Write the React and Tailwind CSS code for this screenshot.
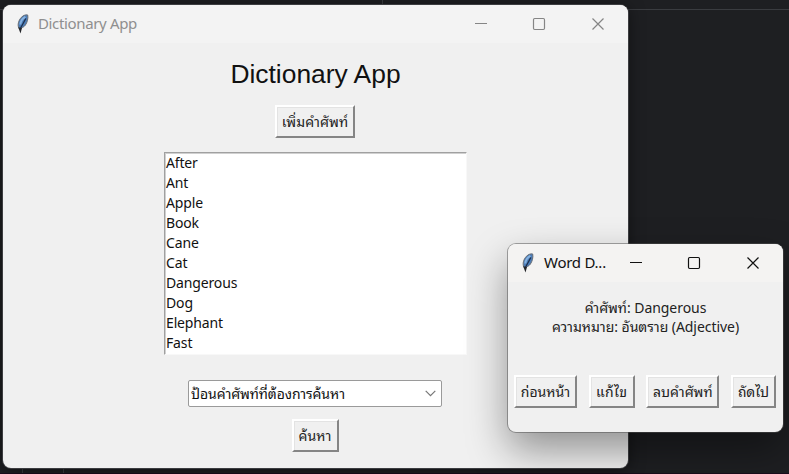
import React from 'react';

const WORDS = ['After', 'Ant', 'Apple', 'Book', 'Cane', 'Cat', 'Dangerous', 'Dog', 'Elephant', 'Fast'];

function Feather() {
  return (
    <svg className="h-[21px] w-[14px] shrink-0" viewBox="0 0 14 21">
      <path d="M3 14.500C1.200 11 2.400 6.500 5.400 3.300 7.500 1.200 10 .5 11.700 1c.7 3.300-.4 7.400-2.400 10.200-1.500 1.900-3.500 3-6.300 3.300z" fill="#4c7db8" stroke="#6a6e74" strokeWidth="1" />
      <path d="M4.300 10.500C4.600 7 6.800 4.200 9.400 2.800" fill="none" stroke="#86b2e0" strokeWidth="2" />
      <path d="M9.800 4.500C8.200 7.500 6.500 10.500 4.600 14" fill="none" stroke="#1d2f4c" strokeWidth="1.300" />
      <path d="M2.200 13.200L6 14 4.500 19.500z" fill="#24262a" />
    </svg>
  );
}

function TitleBar({ title, titleClass, controlClass }) {
  return (
    <div className={`flex h-[38px] shrink-0 items-center ${controlClass}`}>
      <div className="flex flex-1 items-center pl-[13px]">
        <Feather />
        <span className={`ml-2 whitespace-nowrap ${titleClass}`}>{title}</span>
      </div>
      <svg className="mr-[20px] h-[14px] w-[136px] shrink-0" viewBox="0 0 136 14" fill="none" stroke="currentColor">
        <path d="M3 6.500h12" />
        <rect x="61.500" y="1.500" width="11" height="11" rx="1.200" strokeWidth="1.200" />
        <path d="M120.500 1.500l11 11M131.500 1.500l-11 11" strokeWidth="1.200" />
      </svg>
    </div>
  );
}

function TkButton({ children, className, textClass }) {
  return (
    <button
      className={`flex h-[33px] shrink-0 items-center justify-center border-2 border-t-white border-l-white border-r-[#858585] border-b-[#858585] bg-[#f0f0f0] shadow-[inset_1px_1px_0_#e3e3e3] ${className}`}
    >
      <span className={`whitespace-nowrap text-[#222] ${textClass}`}>{children}</span>
    </button>
  );
}

export default function App() {
  return (
    <div className="relative h-[474px] w-[789px] overflow-hidden bg-[#1e1f22] font-['Noto_Sans','Noto_Sans_Thai_Looped','Loma','Garuda','Waree','Tlwg_Typo',sans-serif] text-[#111]">
      <div className="absolute top-[9px] left-0 h-px w-full bg-[#3a3c40]" />
      <div className="absolute top-0 left-[382px] h-[5px] w-px bg-[#3a3c40]" />
      <div className="absolute top-[468px] left-[22px] h-[5px] w-[42px] border-x border-[#3a3c40]" />
      <div className="absolute top-[473px] left-0 h-px w-full bg-[#1a0d1c]" />

      <section className="absolute top-[5px] left-[3px] flex h-[463px] w-[625px] flex-col overflow-hidden rounded-[8px] bg-[#f0f0f0] shadow-[0_0_0_1px_#3c3d40,0_2px_16px_rgba(0,0,0,0.5)]">
        <TitleBar
          title="Dictionary App"
          controlClass="bg-[#f3f3f3] text-[#858585]"
          titleClass="relative -top-px text-[15px] tracking-[-0.35px] text-[#8f8f8f]"
        />
        <main className="flex flex-1 flex-col items-center">
          <h1 className="mt-[14px] h-[34px] font-['Liberation_Sans'] text-[26.4px] leading-[34px] text-[#111]">Dictionary App</h1>
          <TkButton className="mt-[14px] ml-[-1px] w-[80px]" textClass="text-[14px] tracking-[0.1px]">เพิ่มคำศัพท์</TkButton>
          <ul className="mt-[14px] h-[203px] w-[303px] overflow-hidden border border-t-[#a0a0a0] border-l-[#a0a0a0] border-r-[#f8f8f8] border-b-[#f8f8f8] bg-white shadow-[inset_1px_1px_0_#d0d0d0]">
            {WORDS.map((word) => (
              <li key={word} className="h-[20px] pl-px text-[14px] leading-[20px] tracking-[-0.15px]">{word}</li>
            ))}
          </ul>
          <div className="mt-[25px] ml-[-1px] flex h-[27px] w-[254px] items-center justify-between rounded-[2px] border border-[#9a9a9a] bg-white pr-[5px] pl-[2px]">
            <span className="text-[14px] whitespace-nowrap tracking-[-0.1px]">ป้อนคำศัพท์ที่ต้องการค้นหา</span>
            <svg className="h-[7px] w-[11px]" viewBox="0 0 11 7" fill="none" stroke="#777" strokeWidth="1.200">
              <path d="M.7.8l4.800 4.800L10.300.8" />
            </svg>
          </div>
          <TkButton className="mt-[12px] ml-[-1px] w-[47px]" textClass="text-[14px]">ค้นหา</TkButton>
        </main>
      </section>

      <section className="absolute top-[244px] left-[508px] flex h-[188px] w-[275px] flex-col overflow-hidden rounded-[8px] bg-[#f0f0f0] shadow-[0_0_0_1px_rgba(80,80,80,0.5),0_18px_40px_rgba(0,0,0,0.4)]">
        <TitleBar
          title="Word D..."
          controlClass="bg-[#f4f3f2] text-[#111]"
          titleClass="relative -top-px left-px text-[15px] tracking-[-0.25px] text-[#111]"
        />
        <main className="flex flex-1 flex-col">
          <div className="mt-[16px] h-[38px] text-center text-[14px] leading-[19px] tracking-[-0.05px] text-[#222]">
            <p>คำศัพท์: Dangerous</p>
            <p>ความหมาย: อันตราย (Adjective)</p>
          </div>
          <div className="mt-[39px] flex justify-between pr-[7px] pl-[6px]">
            <TkButton className="w-[63px]" textClass="text-[14px]">ก่อนหน้า</TkButton>
            <TkButton className="w-[46px]" textClass="text-[14px] tracking-[0.3px]">แก้ไข</TkButton>
            <TkButton className="w-[73px]" textClass="text-[14px]">ลบคำศัพท์</TkButton>
            <TkButton className="w-[45px]" textClass="text-[14px]">ถัดไป</TkButton>
          </div>
        </main>
      </section>
    </div>
  );
}
